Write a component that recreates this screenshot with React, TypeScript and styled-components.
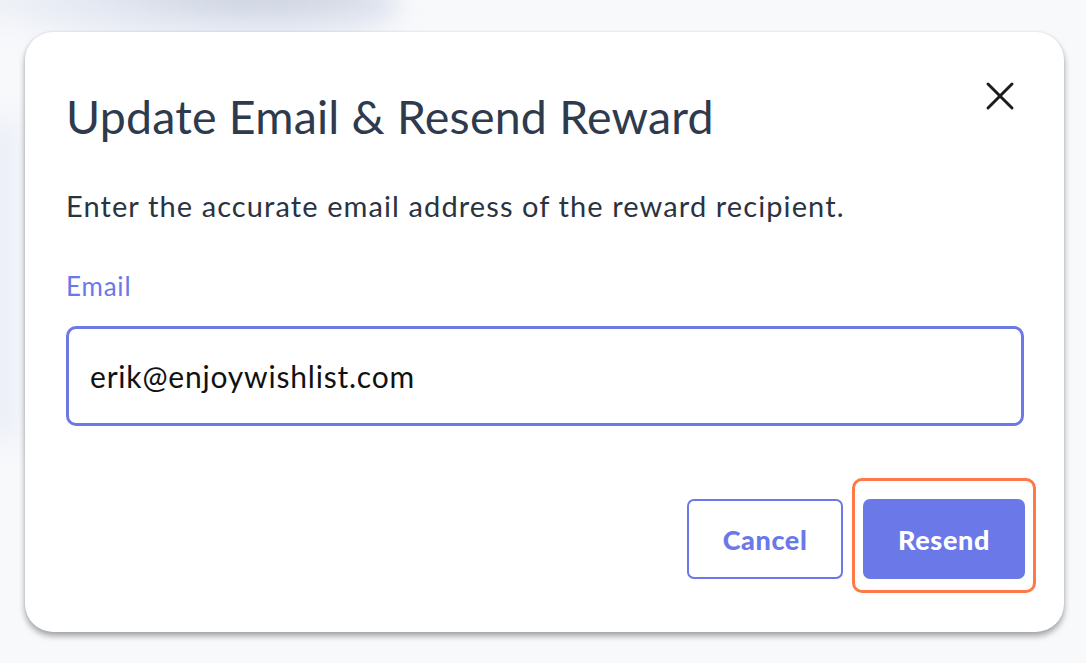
import React from "react";
import styled, { createGlobalStyle } from "styled-components";

const Global = createGlobalStyle`
  html, body { margin: 0; padding: 0; }
  body {
    width: 1086px; height: 663px; overflow: hidden;
    background: #f8f9fb;
    font-family: Lato, "Open Sans", sans-serif;
  }
`;

const Backdrop = styled.div`
  position: relative;
  width: 1086px;
  height: 663px;
  box-sizing: border-box;
  padding: 32px 22px 0 25px;
  background: #f8f9fb;
  overflow: hidden;
`;

const Blur = styled.div`
  position: absolute;
  left: -60px;
  top: -40px;
  width: 460px;
  height: 90px;
  border-radius: 50%;
  background: radial-gradient(ellipse at 70% 40%, #c9cfdc 0%, #e3e8f2 40%, rgba(240,243,249,0) 75%);
  filter: blur(12px);
`;

const BlurSide = styled.div`
  position: absolute;
  left: -40px;
  top: 120px;
  width: 60px;
  height: 320px;
  background: #eceef8;
  filter: blur(14px);
`;

const Modal = styled.div`
  position: relative;
  width: 1039px;
  height: 600px;
  box-sizing: border-box;
  background: #fff;
  border-radius: 28px;
  box-shadow: 0 4px 6px rgba(0,0,0,0.35), 0 0 3px rgba(0,0,0,0.08);
  padding: 56px 41px 0 41px;
  display: flex;
  flex-direction: column;
`;

const Header = styled.div`
  display: flex;
  justify-content: space-between;
  align-items: flex-start;
`;

const Title = styled.h1`
  margin: 0;
  font-size: 46.5px;
  line-height: 56px;
  font-weight: 400;
  color: #2e3a4d;
  letter-spacing: 0.2px;
`;

const Close = styled.button`
  border: none;
  background: none;
  padding: 0;
  margin: -7px 8px 0 0;
  width: 30px;
  height: 30px;
  cursor: pointer;
  display: flex;
`;

const Sub = styled.p`
  margin: 45px 0 0 0;
  font-size: 29px;
  line-height: 34px;
  letter-spacing: 1.1px;
  color: #2a3342;
`;

const Label = styled.label`
  margin-top: 47px;
  font-size: 26px;
  line-height: 32px;
  letter-spacing: 0.8px;
  color: #6b78e8;
`;

const Input = styled.input`
  margin-top: 24px;
  width: 958px;
  height: 100px;
  box-sizing: border-box;
  border: 3px solid #6b78e6;
  border-radius: 10px;
  padding: 0 21px;
  font-family: Lato, sans-serif;
  font-size: 30px;
  letter-spacing: 0.8px;
  color: #111;
  outline: none;
`;

const Actions = styled.div`
  margin-top: 52px;
  width: 970px;
  display: flex;
  justify-content: flex-end;
  align-items: flex-start;
  gap: 9px;
`;

const Button = styled.button<{ $primary?: boolean }>`
  height: 80px;
  box-sizing: border-box;
  border-radius: 7px;
  font-family: Lato, sans-serif;
  font-weight: 900;
  font-size: 27px;
  padding: 0;
  cursor: pointer;
  border: ${p => (p.$primary ? "none" : "2px solid #6b78e8")};
  background: ${p => (p.$primary ? "#6b78e8" : "#fff")};
  color: ${p => (p.$primary ? "#fff" : "#6b78e8")};
  width: ${p => (p.$primary ? "162px" : "156px")};
  margin-top: ${p => (p.$primary ? "0" : "21px")};
  letter-spacing: 0.6px;
`;

const Focus = styled.div`
  box-sizing: border-box;
  border: 3px solid #ff7845;
  border-radius: 10px;
  padding: 18px 8px 11px;
  display: flex;
`;

export default function App() {
  return (
    <>
      <Global />
      <Backdrop>
        <Blur />
        <BlurSide />
        <Modal>
          <Header>
            <Title>Update Email &amp; Resend Reward</Title>
            <Close aria-label="Close">
              <svg width="30" height="30" viewBox="0 0 30 30">
                <path d="M3 3 L27 27 M27 3 L3 27" stroke="#1c1c1c" strokeWidth="3" strokeLinecap="round" />
              </svg>
            </Close>
          </Header>
          <Sub>Enter the accurate email address of the reward recipient.</Sub>
          <Label>Email</Label>
          <Input defaultValue="erik@enjoywishlist.com" />
          <Actions>
            <Button>Cancel</Button>
            <Focus>
              <Button $primary>Resend</Button>
            </Focus>
          </Actions>
        </Modal>
      </Backdrop>
    </>
  );
}
